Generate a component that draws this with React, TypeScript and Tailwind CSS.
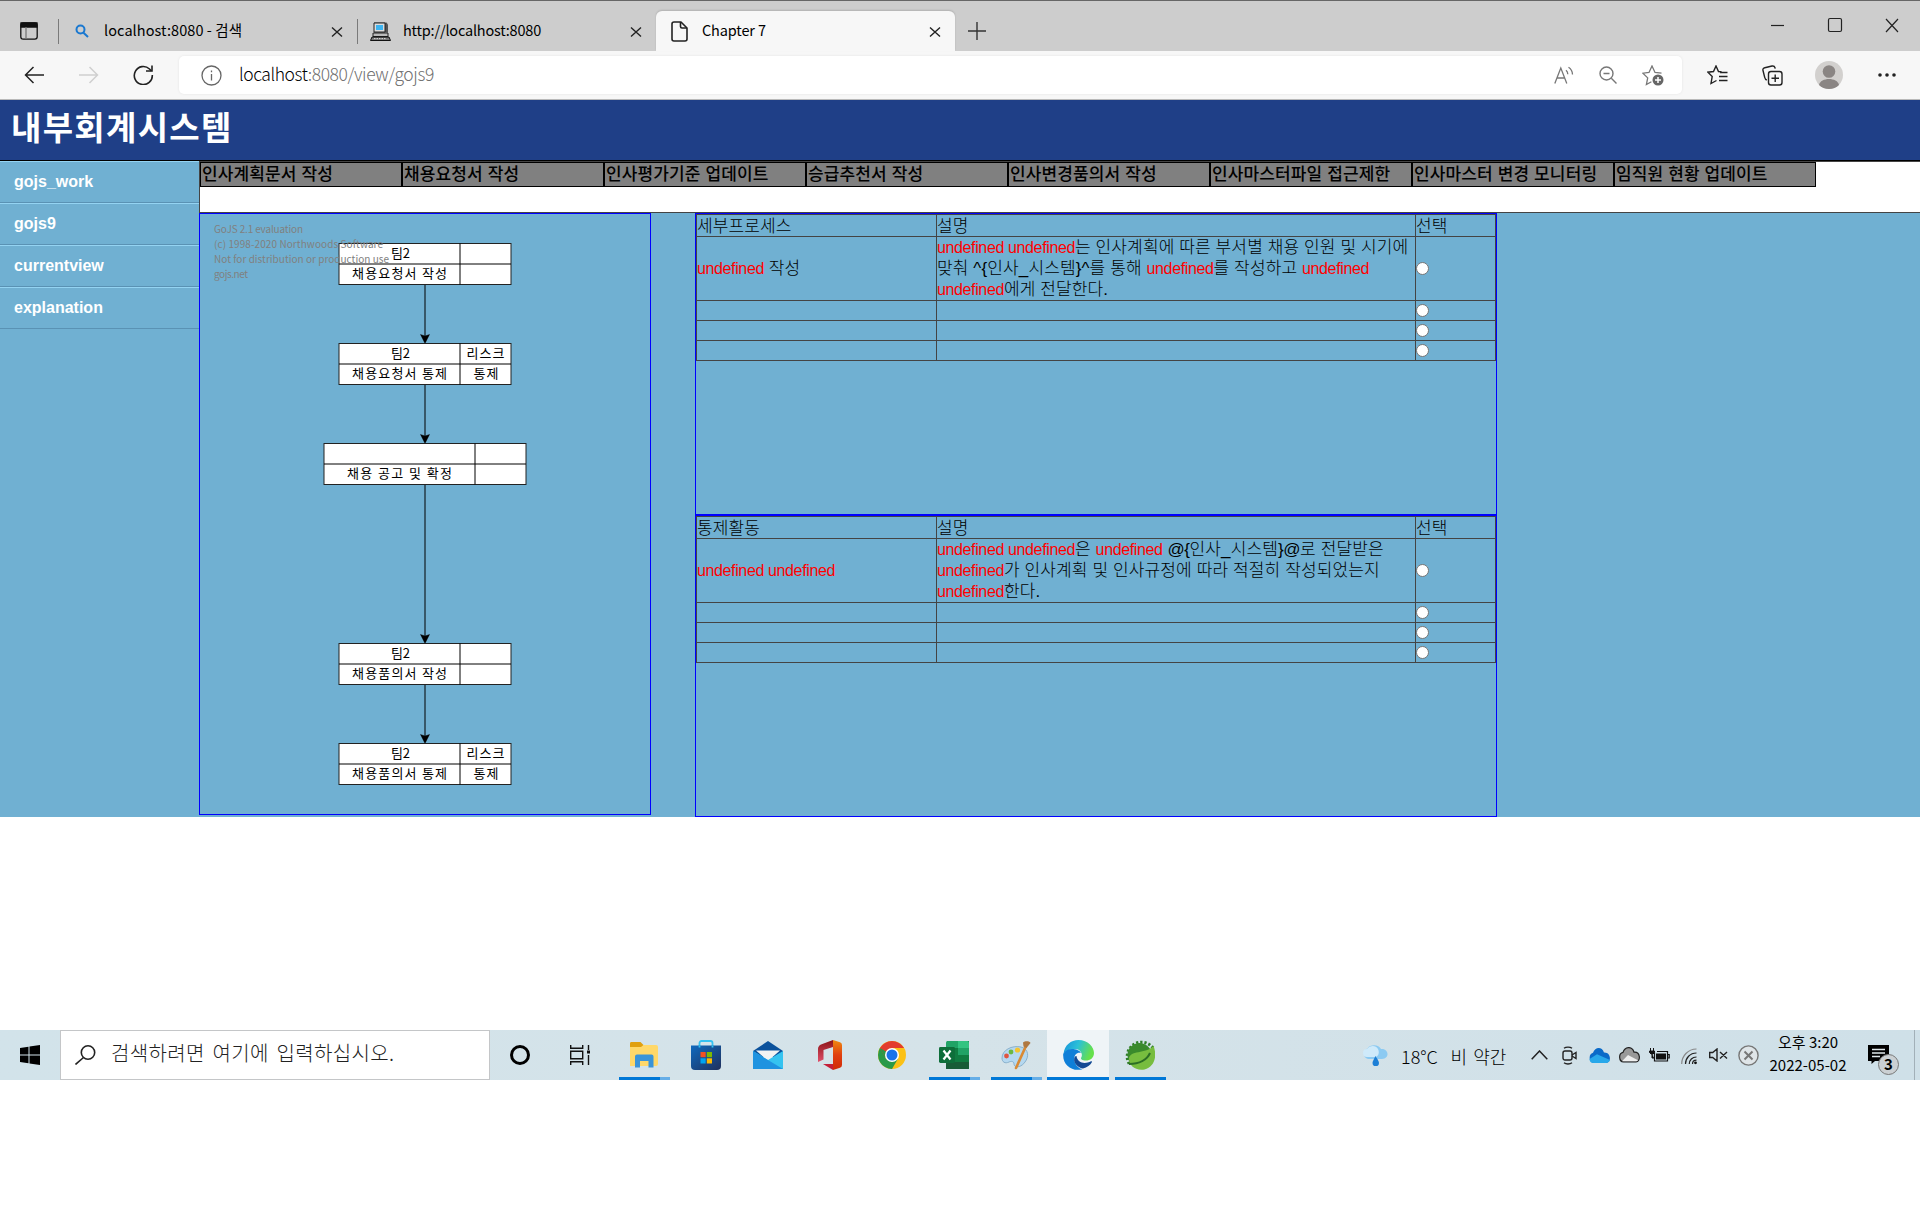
import type { ReactNode } from "react";

const X = ({ className = "" }: { className?: string }) => (
  <svg width="12" height="12" viewBox="0 0 12 12" className={className} fill="none" stroke="#222" strokeWidth="1.4">
    <path d="M1 1.5 11 10.5M11 1.5 1 10.5" />
  </svg>
);

function TabStrip() {
  return (
    <div className="flex h-[51px] border-t border-[#666] bg-[#cdcdcd] text-[14.5px] text-black">
      <div className="flex w-[58px] items-center pl-[20px]">
        <svg width="18" height="18" viewBox="0 0 18 18" fill="none" stroke="#111" strokeWidth="1.3" className="mt-[10px]">
          <rect x="0.8" y="0.8" width="16.4" height="16.4" rx="2.4" />
          <path d="M1 1h16v4H1z" fill="#111" />
          <path d="M6 5v12" stroke="#777" />
        </svg>
      </div>
      <div className="mt-[18px] h-[25px] w-px bg-[#7a7a7a]" />
      <div className="flex w-[298px] items-center pt-[10px] pl-[16px]">
        <svg width="14" height="14" viewBox="0 0 14 14" fill="none" stroke="#1a78d0" strokeWidth="2">
          <circle cx="5.5" cy="5.5" r="4" />
          <path d="M8.5 8.7 13 13" />
        </svg>
        <span className="mt-[-3px] ml-[15px] w-[227px] tracking-[0.080px] whitespace-nowrap">localhost:8080 - 검색</span>
        <X className="mt-[2px]" />
      </div>
      <div className="mt-[18px] h-[25px] w-px bg-[#7a7a7a]" />
      <div className="flex w-[298px] items-center pt-[10px] pl-[12px]">
        <svg width="21" height="19" viewBox="0 0 21 19">
          <path d="M4 .5h12.5l1.5 2v8H4z" fill="#555" />
          <path d="M4 1h11v9H4z" fill="#ddd" stroke="#222" />
          <path d="M6 3h7v5H6z" fill="#3db4f0" />
          <path d="M3 11h15v3.5H3z" fill="#bbb" stroke="#222" />
          <path d="M2 15h17l1.5 3.5H.5z" fill="#777" stroke="#111" />
          <path d="M4 16.6h12" stroke="#ddd" strokeDasharray="1.5 1" />
        </svg>
        <span className="mt-[-3px] ml-[12px] w-[227px] tracking-[-0.200px] whitespace-nowrap">http://localhost:8080</span>
        <X className="mt-[2px]" />
      </div>
      <div className="mt-[10px] flex w-[299px] items-center rounded-t-[6px] bg-[#f7f7f7] pl-[15px] shadow-[0_-1px_2px_rgba(0,0,0,0.14)]">
        <svg width="17" height="21" viewBox="0 0 17 21" fill="none" stroke="#222" strokeWidth="1.6" strokeLinejoin="round">
          <path d="M3 1h7l6 6v11a2 2 0 0 1-2 2H3a2 2 0 0 1-2-2V3a2 2 0 0 1 2-2z" />
          <path d="M9.500 1v4.500a1.500 1.500 0 0 0 1.500 1.500H16" />
        </svg>
        <span className="mt-[-3px] ml-[14px] w-[227px] tracking-[-0.150px] whitespace-nowrap">Chapter 7</span>
        <X className="mt-[2px]" />
      </div>
      <div className="flex flex-1 items-center pt-[9px] pl-[13px]">
        <svg width="18" height="18" viewBox="0 0 18 18" stroke="#333" strokeWidth="1.4">
          <path d="M9 0v18M0 9h18" />
        </svg>
      </div>
      <div className="flex h-[48px] w-[171px] items-center pr-[21px] pl-[22px]">
        <svg width="128" height="16" viewBox="0 0 128 16" fill="none" stroke="#222" strokeWidth="1.2">
          <path d="M0 8.500h13" />
          <rect x="57.500" y="1.500" width="13" height="13" rx="1.500" />
          <path d="M115 2l12 13M127 2l-12 13" />
        </svg>
      </div>
    </div>
  );
}

function Slot({ w, children }: { w: number; children?: ReactNode }) {
  return (
    <div className="flex shrink-0 items-center justify-center" style={{ width: w }}>
      {children}
    </div>
  );
}

function Toolbar() {
  return (
    <div className="flex h-[49px] items-center border-b border-[#b9b9b9] bg-[#f7f7f7]">
      <div className="flex w-[179px] items-center pl-[24px]">
        <svg width="20" height="18" viewBox="0 0 20 18" fill="none" stroke="#222" strokeWidth="1.5">
          <path d="M9.500 1 1.500 9l8 8M1.500 9H20" />
        </svg>
        <svg width="20" height="18" viewBox="0 0 20 18" fill="none" stroke="#cfcfcf" strokeWidth="1.5" className="ml-[35px]">
          <path d="M10.500 1l8 8-8 8M18.500 9H0" />
        </svg>
        <svg width="21" height="20" viewBox="0 0 21 20" fill="none" stroke="#222" strokeWidth="1.6" className="ml-[34px]">
          <path d="M19.300 10A9 9 0 1 1 16.500 4l2 2" />
          <path d="M19 .5V6h-6" />
        </svg>
      </div>
      <div className="flex h-[38px] w-[1503px] items-center rounded-[5px] bg-white pl-[22px] shadow-[0_0_3px_rgba(0,0,0,0.08)]">
        <svg width="21" height="21" viewBox="0 0 21 21" fill="none" stroke="#666" strokeWidth="1.3">
          <circle cx="10.500" cy="10.500" r="9.500" />
          <path d="M10.500 9v6.500M10.500 5.500v1.800" />
        </svg>
        <span className="mt-[-2px] ml-[17px] flex-1 text-[17.500px] font-light tracking-[-0.420px] whitespace-nowrap text-[#707070]">
          <span className="text-black">localhost</span>:8080/view/gojs9
        </span>
        <Slot w={45}>
          <svg width="20" height="19" viewBox="0 0 20 19" fill="none" stroke="#777" strokeWidth="1.3">
            <path d="M.8 17.500 6.800 2l6 15.500M3 12h7.700M12 4.200c1.200 1 1.800 2.300 1.800 4M14.500 1.200c2.500 1.700 4 4 4 7.300" />
          </svg>
        </Slot>
        <Slot w={43}>
          <svg width="18" height="18" viewBox="0 0 18 18" fill="none" stroke="#777" strokeWidth="1.400">
            <circle cx="7.500" cy="7.500" r="6.500" />
            <path d="M12.300 12.300 17.500 17.500M4.500 7.500h6" />
          </svg>
        </Slot>
        <Slot w={47}>
          <svg width="22" height="21" viewBox="0 0 22 21" fill="none" stroke="#777" strokeWidth="1.3">
            <path d="M19.500 8.200 13 7.500 10 1 7 7.500 .9 8.200l4.800 4.700L4.400 19.500l5-2.800" />
            <circle cx="16" cy="15" r="5.500" fill="#666" stroke="none" />
            <path d="M16 12v6M13 15h6" stroke="#fff" strokeWidth="1.500" />
          </svg>
        </Slot>
        <div className="w-[6px]" />
      </div>
      <div className="flex items-center pl-[7px]">
        <Slot w={57}>
          <svg width="21" height="20" viewBox="0 0 21 20" fill="none" stroke="#222" strokeWidth="1.4">
            <path d="M14.500 6.800 11.500 6.500 9 1 6.500 6.500 .9 7.200l4.300 4.300L4 18.500l5.500-3M13 7.500h7.500M12 11.500h8.500M12 15.500h8.500" />
          </svg>
        </Slot>
        <Slot w={53}>
          <svg width="21" height="21" viewBox="0 0 21 21" fill="none" stroke="#222" strokeWidth="1.4">
            <rect x="6.500" y="6.500" width="13.500" height="13.500" rx="2.500" />
            <path d="M13.200 9.500v7.500M9.500 13.200H17M4.800 15C3.500 14.500 3 13.500 2.700 12.300L1 5.500C.6 4 1.500 3 2.800 2.700L10 1c1.600-.3 2.600.4 3 1.800l.2.900" />
          </svg>
        </Slot>
        <Slot w={60}>
          <svg width="28" height="28" viewBox="0 0 28 28">
            <circle cx="14" cy="14" r="14" fill="#d2d0ce" />
            <circle cx="14" cy="10.500" r="6.300" fill="#8a8583" />
            <path d="M4 24c1.500-8 18.500-8 20 0-5 5.300-15 5.300-20 0z" fill="#8a8583" />
          </svg>
        </Slot>
        <Slot w={56}>
          <svg width="18" height="4" viewBox="0 0 18 4" fill="#222">
            <circle cx="2" cy="2" r="1.800" />
            <circle cx="9" cy="2" r="1.800" />
            <circle cx="16" cy="2" r="1.800" />
          </svg>
        </Slot>
      </div>
    </div>
  );
}

const navItems = [
  "인사계획문서 작성",
  "채용요청서 작성",
  "인사평가기준 업데이트",
  "승급추천서 작성",
  "인사변경품의서 작성",
  "인사마스터파일 접근제한",
  "인사마스터 변경 모니터링",
  "임직원 현황 업데이트",
];

const sideItems = ["gojs_work", "gojs9", "currentview", "explanation"];

type NodeData = { y: number; x: number; w: number; split: number; top?: string; name: string; nameW: number; nameX: number; risk?: boolean };

const nodes: NodeData[] = [
  { y: 243.5, x: 339, w: 172, split: 460, top: "팀2", name: "채용요청서 작성", nameX: 352, nameW: 95 },
  { y: 343.5, x: 339, w: 172, split: 460, top: "팀2", name: "채용요청서 통제", nameX: 352, nameW: 95, risk: true },
  { y: 443.5, x: 324, w: 202, split: 475, name: "채용 공고 및 확정", nameX: 347, nameW: 105 },
  { y: 643.5, x: 339, w: 172, split: 460, top: "팀2", name: "채용품의서 작성", nameX: 352, nameW: 95 },
  { y: 743.5, x: 339, w: 172, split: 460, top: "팀2", name: "채용품의서 통제", nameX: 352, nameW: 95, risk: true },
];

const watermark = [
  { text: "GoJS 2.1 evaluation", w: 89 },
  { text: "(c) 1998-2020 Northwoods Software", w: 169 },
  { text: "Not for distribution or production use", w: 175 },
  { text: "gojs.net", w: 34 },
];

function Diagram() {
  return (
    <svg width="450" height="600" viewBox="200 214 450 600" fontSize="13" className="block font-['Noto_Sans_CJK_KR',sans-serif]">
      {nodes.slice(0, -1).map((n, i) => {
        const end = nodes[i + 1].y;
        return (
          <g key={i}>
            <path d={`M425 ${n.y + 41}V${end - 4}`} stroke="#000" strokeWidth="1" />
            <path d={`M420.500 ${end - 9}L425 ${end}l4.500-9L425 ${end - 7.5}z`} fill="#000" stroke="#000" strokeWidth="0.400" />
          </g>
        );
      })}
      {nodes.map((n) => (
        <g key={n.y}>
          <rect x={n.x} y={n.y} width={n.w} height="41" fill="#fff" stroke="#222" />
          <path d={`M${n.x} ${n.y + 20.5}h${n.w}M${n.split} ${n.y}v41`} stroke="#000" />
          {n.top && (
            <text x="391" y={n.y + 14} textLength="19">
              {n.top}
            </text>
          )}
          <text x={n.nameX} y={n.y + 34} textLength={n.nameW}>
            {n.name}
          </text>
          {n.risk && (
            <>
              <text x="466.500" y={n.y + 14} textLength="38">
                리스크
              </text>
              <text x="473.500" y={n.y + 34} textLength="25">
                통제
              </text>
            </>
          )}
        </g>
      ))}
      <g fill="#808080" fontSize="10">
        {watermark.map((l, i) => (
          <text key={i} x="214" y={233 + i * 15} textLength={l.w}>
            {l.text}
          </text>
        ))}
      </g>
    </svg>
  );
}

const U = () => <span className="text-[16px] tracking-[-0.370px] text-[#f00]">undefined</span>;
const UU = () => <span className="text-[16px] tracking-[-0.370px] text-[#f00]">undefined undefined</span>;

function InfoTable({ title, name, lines }: { title: string; name: ReactNode; lines: ReactNode[] }) {
  const cell = "flex items-center border-r border-b border-[#444] whitespace-nowrap";
  const head = cell + " pt-[2px]";
  const radio = (
    <input type="radio" className="mt-[-1px] h-[13px] w-[13px] appearance-none rounded-full border border-[#767676] bg-white" />
  );
  return (
    <div className="h-[302px] w-[802px] border border-[#00f]">
      <div className="grid w-[800px] grid-cols-[240px_479px_80px] grid-rows-[22px_64px_20px_20px_20px] border-t border-l border-[#444] text-[17px] leading-[21px] font-light tracking-[0.120px] text-black">
        <div className={head}>{title}</div>
        <div className={head}>설명</div>
        <div className={head}>선택</div>
        <div className={cell}>
          <div className="h-[21px]">{name}</div>
        </div>
        <div className={cell}>
          <div>
            {lines.map((l, i) => (
              <div key={i} className="h-[21px]">
                {l}
              </div>
            ))}
          </div>
        </div>
        <div className={cell}>{radio}</div>
        {[0, 1, 2].map((r) => (
          <div key={r} className="contents">
            <div className={cell} />
            <div className={cell} />
            <div className={cell}>{radio}</div>
          </div>
        ))}
      </div>
    </div>
  );
}

function Page() {
  return (
    <div className="h-[930px] bg-white">
      <div className="flex h-[61px] items-center border-b border-black bg-[#1f3f87] pl-[11px]">
        <h1 className="mt-[-4px] text-[33px] leading-none font-bold tracking-[1.300px] text-white">내부회계시스템</h1>
      </div>
      <div className="flex h-[656px]">
        <div className="w-[199px] bg-[#70b0d2]">
          {sideItems.map((s) => (
            <div
              key={s}
              className="flex h-[42px] items-center border-t border-b border-t-[#94d3f2] border-b-[#5a92b4] pl-[14px] text-[16px] font-bold text-white"
            >
              {s}
            </div>
          ))}
        </div>
        <div className="flex-1">
          <div className="h-[52px] border-t border-b border-l border-[#444] bg-white">
            <div className="flex">
              {navItems.map((n) => (
                <div
                  key={n}
                  className="flex h-[25px] w-[202px] items-center border border-black bg-[#808080] pl-px text-[17px] leading-[23px] font-medium tracking-[0.130px] whitespace-nowrap text-black"
                >
                  {n}
                </div>
              ))}
            </div>
          </div>
          <div className="flex bg-[#70b0d2]">
            <div className="h-[602px] w-[452px] border border-[#00f]">
              <Diagram />
            </div>
            <div className="ml-[44px]">
              <InfoTable
                title="세부프로세스"
                name={
                  <>
                    <U /> 작성
                  </>
                }
                lines={[
                  <>
                    <UU />는 인사계획에 따른 부서별 채용 인원 및 시기에
                  </>,
                  <>
                    맞춰 ^{"{"}인사_시스템{"}"}^를 통해 <U />를 작성하고 <U />
                  </>,
                  <>
                    <U />에게 전달한다.
                  </>,
                ]}
              />
              <InfoTable
                title="통제활동"
                name={<UU />}
                lines={[
                  <>
                    <UU />은 <U /> <span className="tracking-[-0.400px]">@{"{"}</span>인사_시스템
                    <span className="tracking-[-0.400px]">{"}"}@</span>로 전달받은
                  </>,
                  <>
                    <U />가 인사계획 및 인사규정에 따라 적절히 작성되었는지
                  </>,
                  <>
                    <U />한다.
                  </>,
                ]}
              />
            </div>
          </div>
        </div>
      </div>
    </div>
  );
}

const FolderIcon = () => (
  <svg width="28" height="26" viewBox="0 0 28 26">
    <path d="M0 1.500C0 .5.500 0 1.500 0h9l3 3v3H0z" fill="#e0a010" />
    <path d="M0 5h11l2.500-2H26a2 2 0 0 1 2 2v17a2 2 0 0 1-2 2H0z" fill="#ffd869" />
    <path d="M5 25.500V14.500a2 2 0 0 1 2-2h14.500a2 2 0 0 1 2 2v11h-5V19h-8.500v6.500z" fill="#3a94d8" />
  </svg>
);

const StoreIcon = () => (
  <svg width="30" height="30" viewBox="0 0 30 30">
    <defs>
      <linearGradient id="st" x1="0" y1="0" x2="1" y2="1">
        <stop offset="0" stopColor="#0f6abf" />
        <stop offset="1" stopColor="#20305c" />
      </linearGradient>
    </defs>
    <path d="M8.500 7V3a2 2 0 0 1 2-2h9a2 2 0 0 1 2 2v4" fill="none" stroke="#35c1f1" strokeWidth="1.800" />
    <path d="M0 5.500h30V26a4 4 0 0 1-4 4H4a4 4 0 0 1-4-4z" fill="url(#st)" />
    <path d="M8.500 5.500v2M21.500 5.500v2" stroke="#35c1f1" strokeWidth="1.800" />
    <path d="M9.500 12h5.200v5.200H9.500z" fill="#f25022" />
    <path d="M15.800 12H21v5.200h-5.200z" fill="#7fba00" />
    <path d="M9.500 18.300h5.200v5.200H9.500z" fill="#00a4ef" />
    <path d="M15.800 18.300H21v5.200h-5.200z" fill="#ffb900" />
  </svg>
);

const MailIcon = () => (
  <svg width="30" height="28" viewBox="0 0 30 28">
    <path d="M0 10 15 0l15 10v6H0z" fill="#0b529c" />
    <path d="M3 9.500h24L15 20z" fill="#f3f3f3" />
    <path d="M0 10l15 9 15-9v18H0z" fill="#35c3f0" />
    <path d="M0 10l30 18H0z" fill="#1f93e0" />
  </svg>
);

const OfficeIcon = () => (
  <svg width="24" height="30" viewBox="0 0 24 30">
    <defs>
      <linearGradient id="of" x1="0" y1="0" x2="0" y2="1">
        <stop offset="0" stopColor="#8c1216" />
        <stop offset="1" stopColor="#e0506a" />
      </linearGradient>
      <linearGradient id="of2" x1="0" y1="0" x2="0" y2="1">
        <stop offset="0" stopColor="#f08a10" />
        <stop offset="0.500" stopColor="#e04010" />
        <stop offset="1" stopColor="#d02a08" />
      </linearGradient>
    </defs>
    <path d="M15 0 3 4.500Q0 6 0 9v13l5.500-2.500V10L15 7z" fill="url(#of)" />
    <path d="M15 0l7 2.300Q24 3 24 5v20q0 2-2 2.700L15 30z" fill="url(#of2)" />
    <path d="M5 24h10v6z" fill="#c4203a" />
  </svg>
);

const ChromeIcon = () => (
  <svg width="28" height="28" viewBox="0 0 28 28">
    <circle cx="14" cy="14" r="14" fill="#fbc116" />
    <path d="M14 14 1.900 7A14 14 0 0 0 14 28l6.100-10.500z" fill="#2a9a48" />
    <path d="M1.900 7a14 14 0 0 1 24.200 0H14L7.900 17.500z" fill="#e33b2e" />
    <path d="M14 14 7.900 17.500 1.900 7z" fill="#2a9a48" />
    <circle cx="14" cy="14" r="7" fill="#fff" />
    <circle cx="14" cy="14" r="5.500" fill="#1a73e8" />
  </svg>
);

const ExcelIcon = () => (
  <svg width="30" height="28" viewBox="0 0 30 28">
    <path d="M8 0h22v28H8z" fill="#107c41" />
    <path d="M7 1.500A1.500 1.500 0 0 1 8.500 0H19v7H7z" fill="#21a366" />
    <path d="M19 0h9.500A1.500 1.500 0 0 1 30 1.500V7H19z" fill="#33c481" />
    <path d="M19 7h11v7H19z" fill="#21a366" />
    <path d="M7 21h23v5.500a1.500 1.500 0 0 1-1.500 1.500H7z" fill="#185c37" />
    <rect x="0" y="6" width="16" height="16" rx="1.400" fill="#0e6e3a" />
    <path d="M4.500 9.500l7 9M11.500 9.500l-7 9" stroke="#fff" strokeWidth="2.200" />
  </svg>
);

const PaintIcon = () => (
  <svg width="30" height="29" viewBox="0 0 30 29">
    <path d="M1 17C1 9 11 4 20 6c8 2 8 10 4 15-4 6-11 6-11 2 0-3-3-3-5-2-4 2-7 0-7-4z" fill="#b5d8f0" stroke="#7ba6c4" strokeWidth="0.800" />
    <circle cx="5.500" cy="15" r="2.400" fill="#e05540" />
    <circle cx="10" cy="11" r="2.400" fill="#6bb844" />
    <circle cx="16.500" cy="9" r="2.600" fill="#f4c430" />
    <path d="M24.500 6 15 27" stroke="#d98a35" strokeWidth="2.600" strokeLinecap="round" />
    <path d="M22 1.500c2-2 7-1.500 7.500.5L25.500 7 22.500 5.500z" fill="#b07840" />
  </svg>
);

const EdgeIcon = () => (
  <svg width="31" height="30" viewBox="0 0 31 30">
    <defs>
      <linearGradient id="eg" x1="0" y1="0" x2="1" y2="0.300">
        <stop offset="0" stopColor="#1590dc" />
        <stop offset="0.500" stopColor="#2bc0d8" />
        <stop offset="1" stopColor="#66e04c" />
      </linearGradient>
    </defs>
    <path d="M.5 14C1.500 5 8 0 15.500 0 25 0 31 7 31 13c0 5-4 7.500-8 7.500-4 0-6-1.500-4.500-3.500C20 14 17.500 9 12 9 6 9 2 11 .5 14z" fill="url(#eg)" />
    <path d="M.2 14C2 10 6 8.500 10.500 9c4 .4 6.500 2 7.500 4-5-1-7.500 3-6.500 8 .8 4 4 7.500 8 8.200C9 32-.5 25 .2 14z" fill="#0f7fd8" />
    <path d="M11.300 18C10 24 16 28 20 28.500c4-1 7.500-3.500 9-6.500.2-.8-.4-1-1-.7-6 3-13.500 2-14.500-5.300-1-.2-1.800.8-2.200 2z" fill="#134a94" />
  </svg>
);

const SpringIcon = () => (
  <svg width="30" height="30" viewBox="0 0 30 30">
    <path d="M28 8A14 14 0 1 0 5 25" fill="none" stroke="#2f7d28" strokeWidth="3" strokeDasharray="2.200 1.900" />
    <circle cx="14.500" cy="15" r="12" fill="#3a8a2c" />
    <path d="M28.500 6c4 10 1 21-9 23.500C10 31 4 25 4 19c0-9 17-5 24.500-13z" fill="#77bd3f" />
    <path d="M4 24C14 24 22 20 25 13" fill="none" stroke="#2c6e25" strokeWidth="2" />
  </svg>
);

const apps: { icon: ReactNode; bar?: "split" | "full" | "active" }[] = [
  { icon: <FolderIcon />, bar: "split" },
  { icon: <StoreIcon /> },
  { icon: <MailIcon /> },
  { icon: <OfficeIcon /> },
  { icon: <ChromeIcon /> },
  { icon: <ExcelIcon />, bar: "split" },
  { icon: <PaintIcon />, bar: "split" },
  { icon: <EdgeIcon />, bar: "active" },
  { icon: <SpringIcon />, bar: "full" },
];

function Taskbar() {
  return (
    <div className="flex h-[50px] bg-linear-to-r from-[#d2e3ea] via-[#d5e3e9] to-[#cfe0e8] text-black">
      <Slot w={60}>
        <svg width="20" height="20" viewBox="0 0 20 20" fill="#000">
          <path d="M0 3l8.500-1.300v7.800H0zM9.500 1.500 20 0v9.500H9.500zM0 10.500h8.500v7.800L0 17zM9.500 10.500H20V20L9.500 18.500z" />
        </svg>
      </Slot>
      <div className="flex w-[430px] items-center border border-[#c4c6c8] bg-white pl-[14px]">
        <svg width="21" height="20" viewBox="0 0 21 20" fill="none" stroke="#222" strokeWidth="1.600">
          <circle cx="13" cy="7.500" r="6.700" />
          <path d="M8.500 12.500.5 19.500" />
        </svg>
        <span className="mt-[-4px] ml-[15px] text-[20px] font-light tracking-[0.380px] [word-spacing:2.800px] whitespace-nowrap text-[#222]">
          검색하려면 여기에 입력하십시오.
        </span>
      </div>
      <Slot w={60}>
        <div className="h-[20px] w-[20px] rounded-full border-[3px] border-black" />
      </Slot>
      <Slot w={60}>
        <svg width="20" height="20" viewBox="0 0 20 20" fill="none" stroke="#111" strokeWidth="1.400">
          <path d="M.7 0v3.300h12V0M.7 20v-3.300h12V20M.7 6.200h12v7.600H.7zM18.500 0v5M18.500 10v10" />
          <path d="M17 5.500h3v3h-3z" fill="#111" stroke="none" />
        </svg>
      </Slot>
      <div className="w-[3px]" />
      {apps.map((a, i) => (
        <div key={i} className={a.bar === "active" ? "flex w-[62px] flex-col bg-[#eff4f7]" : "flex w-[62px] flex-col"}>
          <div className="flex h-[47px] items-center justify-center pt-[3px]">{a.icon}</div>
          {a.bar === "split" && (
            <div className="flex h-[3px] pl-[6px]">
              <div className="w-[41px] bg-[#0078d7]" />
              <div className="w-[10px] bg-[#66aee7]" />
            </div>
          )}
          {a.bar === "full" && <div className="ml-[6px] h-[3px] w-[51px] bg-[#0078d7]" />}
          {a.bar === "active" && <div className="h-[3px] bg-[#0078d7]" />}
        </div>
      ))}
      <div className="flex flex-1 items-center justify-end">
        <svg width="26" height="21" viewBox="0 0 26 21">
          <path d="M6 14a5.500 5.500 0 0 1-.5-10.500C8-1 17-1 19 4c8-1 9 10 1 10z" fill="#8ccaf2" />
          <path d="M5 12a4 4 0 0 1 0-8C8 0 14 0 16 4c2 4 0 8-3 8z" fill="#cfeafa" />
          <path d="M13.500 11c2.500 4 3.500 5.500 3.500 7a3 3 0 0 1-6.500 0c0-1.500 1-3 3-7z" fill="#1d7fd6" />
        </svg>
        <span className="mt-[2px] ml-[13px] w-[124px] text-[18px] font-light [word-spacing:2.300px] whitespace-pre">18°C&nbsp; 비 약간</span>
      </div>
      <Slot w={29}>
        <svg width="17" height="10" viewBox="0 0 17 10" fill="none" stroke="#222" strokeWidth="1.500">
          <path d="M.7 9.300 8.500 1l7.800 8.300" />
        </svg>
      </Slot>
      <Slot w={30}>
        <svg width="15" height="19" viewBox="0 0 15 19" fill="none" stroke="#222" strokeWidth="1.400">
          <rect x="1" y="5" width="9" height="9" rx="2" />
          <path d="M10 9l4-2.500v6L10 10M2 2.200C4 .7 8 .7 10 2.200M2 16.800c2 1.500 6 1.500 8 0" />
        </svg>
      </Slot>
      <Slot w={30}>
        <svg width="21" height="15" viewBox="0 0 21 13" preserveAspectRatio="none">
          <path d="M4.500 13A4.500 4.500 0 0 1 4 4.200C6-1 13-1.500 15 4c7-.5 8 8.500 2 9z" fill="#0a6ac8" />
          <path d="M4.500 13c-2.500 0-4-1.500-4-3.500L8 5.500l13 5c-.7 1.500-2 2.500-4 2.500z" fill="#28a8ea" />
        </svg>
      </Slot>
      <Slot w={30}>
        <svg width="21" height="16" viewBox="0 0 21 14" preserveAspectRatio="none" stroke="#222" strokeWidth="1.200">
          <path d="M4.500 13A4.200 4.200 0 0 1 4 4.700C6-.5 13-1 15 4.500c6.500-.5 7 8 2 8.500z" fill="#999" />
          <path d="M3 12.500l6-5.500 10 4.500c-1 1-1.500 1-3 1H5z" fill="#eee" stroke="none" />
        </svg>
      </Slot>
      <Slot w={30}>
        <svg width="21" height="14" viewBox="0 0 21 14" fill="none" stroke="#111">
          <path d="M5.500 4.500V13h13V3.500H8M19 6.500h1.200v3.500H19" strokeWidth="1.200" />
          <path d="M7 5.500h10v6H7z" fill="#111" stroke="none" />
          <path d="M1.500 0v3M4.500 0v3M.5 3h5v1.500L4 6H2L.5 4.500zM3 6v4h2" fill="#111" />
        </svg>
      </Slot>
      <Slot w={31}>
        <svg width="17" height="17" viewBox="0 0 17 17" fill="none" stroke="#222" strokeWidth="1.200" className="mt-[3px]">
          <path d="M.7 16C.7 8 7 1 15.500 1" stroke="#888" />
          <path d="M4.500 16C4.500 10 9 5 15.500 5M8.300 16c0-4 3-7 7.200-7M11.500 16c0-2 1.500-3.800 4-3.800" />
          <circle cx="14.500" cy="14.800" r="1.400" fill="#111" stroke="none" />
        </svg>
      </Slot>
      <Slot w={27}>
        <svg width="19" height="14" viewBox="0 0 19 14" fill="none" stroke="#222" strokeWidth="1.400">
          <path d="M.7 4.500h3L8 1v12L3.700 9.500h-3zM11 4l7 6.500M18 4l-7 6.500" />
        </svg>
      </Slot>
      <Slot w={32}>
        <svg width="21" height="21" viewBox="0 0 21 21" fill="#dfe5e8" stroke="#777" strokeWidth="1.400">
          <circle cx="10.500" cy="10.500" r="9.600" />
          <path d="M6.500 6.500l8 8M14.500 6.500l-8 8" strokeWidth="2" />
        </svg>
      </Slot>
      <div className="flex w-[88px] flex-col items-center text-[15px] leading-[23px] whitespace-nowrap">
        <span>오후 3:20</span>
        <span>2022-05-02</span>
      </div>
      <div className="w-[62px] pt-[15px] pl-[16px]">
        <svg width="32" height="30" viewBox="0 0 32 30">
          <path d="M0 0h21v16H7l-3.500 3V16H0z" fill="#000" />
          <path d="M4 4.500h13M4 8h13M4 11.500h8" stroke="#dfe7ea" strokeWidth="1.300" />
          <circle cx="20.500" cy="19.500" r="10" fill="#cbd0d3" stroke="#777" />
          <text x="20.500" y="25" fontSize="15" fontWeight="700" textAnchor="middle">
            3
          </text>
        </svg>
      </div>
      <div className="w-[6px] border-l border-[#a2b0b8]" />
    </div>
  );
}

export default function App() {
  return (
    <div className="h-[1209px] w-[1920px] overflow-hidden bg-white font-['Liberation_Sans','Noto_Sans_CJK_KR',sans-serif]">
      <div className="font-['Noto_Sans_CJK_KR','Noto_Sans',sans-serif]">
        <TabStrip />
        <Toolbar />
      </div>
      <Page />
      <div className="font-['Noto_Sans_CJK_KR','Noto_Sans',sans-serif]">
        <Taskbar />
      </div>
    </div>
  );
}
